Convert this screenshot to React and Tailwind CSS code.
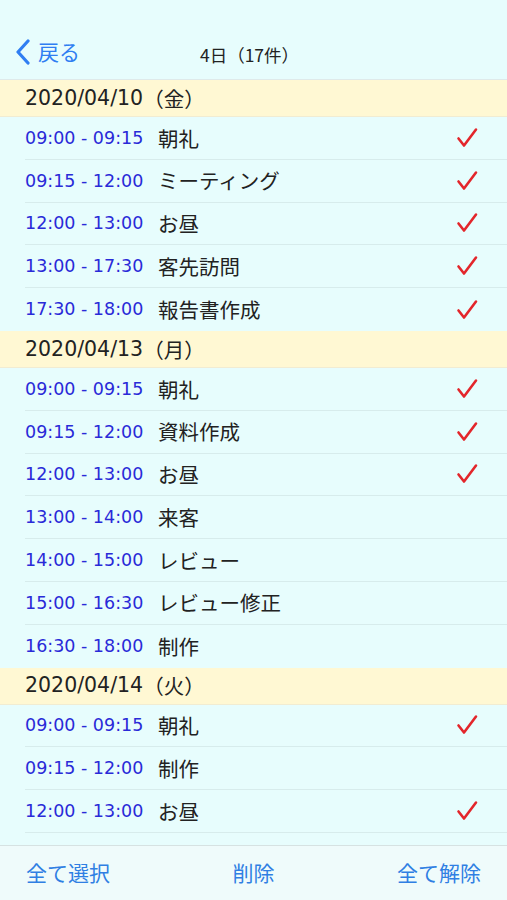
const sections = [
  {
    date: '2020/04/10',
    dow: '（金）',
    items: [
      { time: '09:00 - 09:15', title: '朝礼', done: true },
      { time: '09:15 - 12:00', title: 'ミーティング', done: true },
      { time: '12:00 - 13:00', title: 'お昼', done: true },
      { time: '13:00 - 17:30', title: '客先訪問', done: true },
      { time: '17:30 - 18:00', title: '報告書作成', done: true },
    ],
  },
  {
    date: '2020/04/13',
    dow: '（月）',
    items: [
      { time: '09:00 - 09:15', title: '朝礼', done: true },
      { time: '09:15 - 12:00', title: '資料作成', done: true },
      { time: '12:00 - 13:00', title: 'お昼', done: true },
      { time: '13:00 - 14:00', title: '来客', done: false },
      { time: '14:00 - 15:00', title: 'レビュー', done: false },
      { time: '15:00 - 16:30', title: 'レビュー修正', done: false },
      { time: '16:30 - 18:00', title: '制作', done: false },
    ],
  },
  {
    date: '2020/04/14',
    dow: '（火）',
    more: true,
    items: [
      { time: '09:00 - 09:15', title: '朝礼', done: true },
      { time: '09:15 - 12:00', title: '制作', done: false },
      { time: '12:00 - 13:00', title: 'お昼', done: true },
    ],
  },
];

const jp = "font-['Noto_Sans_CJK_JP','Noto_Sans',sans-serif]";
const num = "font-['DejaVu_Sans','Noto_Sans_CJK_JP',sans-serif]";

const Check = () => (
  <svg width="22" height="22" viewBox="0 0 22 22" fill="none">
    <path d="M2.5 11.5 L8 18.5 L20 2.5" stroke="#e3262b" strokeWidth="2.6" strokeLinecap="round" strokeLinejoin="round" />
  </svg>
);

export default function App() {
  return (
    <div className={`w-full h-[900px] flex flex-col bg-[#e7fdfd] overflow-hidden ${jp}`}>
      {/* nav bar */}
      <div className="h-[80px] shrink-0 relative flex items-center pt-[24px] pl-[15px] border-b border-[#dfeaea]">
        <div className="flex items-center gap-[7px] text-[#2f7ef2]">
          <svg width="16" height="26" viewBox="0 0 16 26" fill="none">
            <path d="M13 2 L3 13 L13 24" stroke="#2f7ef2" strokeWidth="3.2" strokeLinecap="round" strokeLinejoin="round" />
          </svg>
          <span className="text-[21px] leading-none">戻る</span>
        </div>
        <div className="absolute left-0 right-0 bottom-[16px] pr-[8px] text-center text-[17.5px] leading-none text-[#222] pointer-events-none">
          4日（17件）
        </div>
      </div>

      {/* list */}
      <div className="flex-1 overflow-hidden">
        {sections.map((s) => (
          <div key={s.date}>
            <div className="h-[37px] flex items-center pl-[25px] bg-[#fff8d3] border-b border-[#f1ecd2] text-[20.5px] text-[#222]">
              <span className={num}>{s.date}</span>
              <span>{s.dow}</span>
            </div>
            {s.items.map((it, i) => (
              <div key={i} className="h-[42.8px] pl-[25px]">
                <div className={`h-full flex items-center pr-[29px] ${i < s.items.length - 1 || s.more ? 'border-b border-[#d7ecec]' : ''}`}>
                  <span className={`${num} text-[17.5px] text-[#2a2ad8] w-[133px] shrink-0`}>{it.time}</span>
                  <span className="flex-1 text-[20.5px] text-[#222]">{it.title}</span>
                  {it.done && <Check />}
                </div>
              </div>
            ))}
          </div>
        ))}
      </div>

      {/* toolbar */}
      <div className="h-[55px] shrink-0 flex items-center justify-between px-[26px] bg-[#effbfb] border-t border-[#d6e2e2] text-[21px] text-[#2f7fe3]">
        <span>全て選択</span>
        <span>削除</span>
        <span>全て解除</span>
      </div>
    </div>
  );
}
